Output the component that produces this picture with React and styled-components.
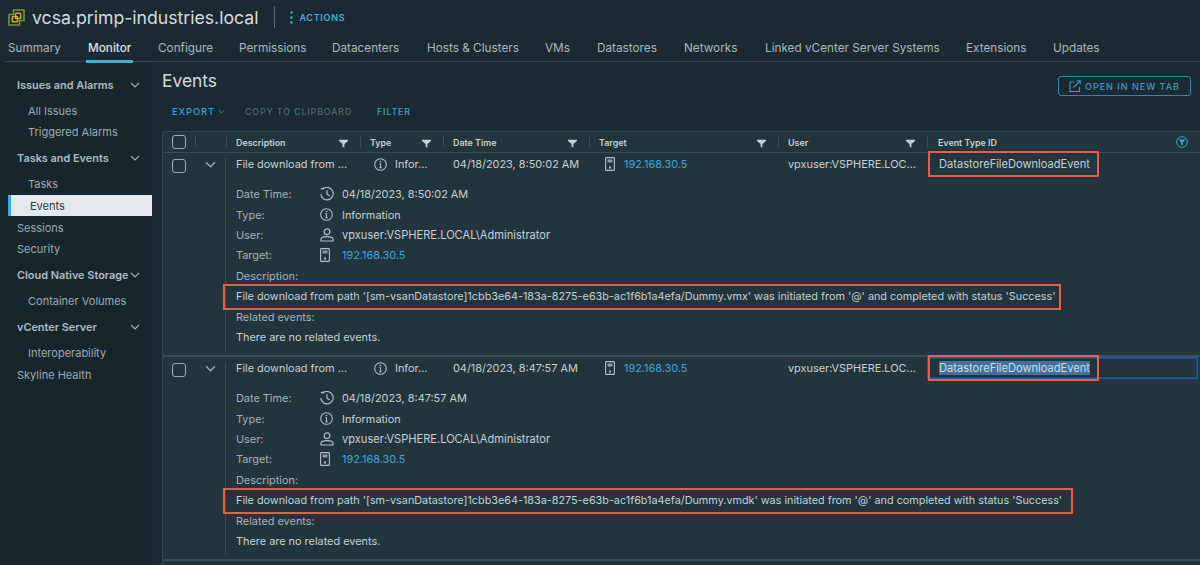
import React from "react";
import styled, { createGlobalStyle } from "styled-components";

const Global = createGlobalStyle`
  html, body { margin: 0; background: #1b2a32; }
  * { box-sizing: border-box; }
  body { font-family: Inter, "Noto Sans", "Liberation Sans", sans-serif; }
`;
const Page = styled.div`
  width: 1200px; height: 565px; overflow: hidden; background: #1b2a32; color: #c4ced3;
  display: flex; flex-direction: column;
`;
const Header = styled.header`
  height: 36px; display: flex; align-items: center; padding: 0 0 2px 8px; flex: none;
`;
const Title = styled.h1`
  margin: 0 0 0 7px; font-size: 17.65px; font-weight: 400; color: #d5dde1; white-space: nowrap;
`;
const Divider = styled.span`
  width: 1px; height: 22px; background: #5c6f79; margin: 0 15px 0 16px;
`;
const ActionsBtn = styled.div`
  display: flex; align-items: center; gap: 6px; color: #49afd9; font-size: 9px; font-weight: 600; letter-spacing: .7px;
`;
const Tabs = styled.nav`
  height: 26px; flex: none; margin-left: 5px; display: flex; border-bottom: 1.5px solid #35474f; align-items: stretch;
`;
const Tab = styled.div`
  font-size: 11.75px; color: ${p => (p.$active ? "#dbe2e6" : "#aab7be")}; display: flex; align-items: center; white-space: nowrap;
  position: relative; width: ${p => p.$w}px; padding-left: ${p => p.$pl || 0}px; padding-bottom: 2px;
  ${p => p.$active && `font-weight:500; &::after{content:""; position:absolute; left:0; width:47px; bottom:-1.5px; height:2.5px; background:#49afd9;}`}
`;
const Body = styled.div`
  flex: 1; display: flex; min-height: 0;
`;
const Side = styled.aside`
  width: 153px; flex: none; background: #17252c; border-right: 1px solid #1f2e36; padding: 12px 0 0 8px; display: flex; flex-direction: column;
`;
const SideHead = styled.div`
  height: 22px; margin-top: ${p => p.$mt || 0}px; padding: 0 12px 0 9px; display: flex; align-items: center; justify-content: space-between;
  font-size: 10.9px; font-weight: 600; color: #afbbc2; white-space: nowrap;
`;
const SideItem = styled.div`
  height: 21.3px; margin-top: ${p => p.$mt || 0}px; padding-left: ${p => p.$top ? 9 : 20}px; display: flex; align-items: center;
  font-size: 11px; color: #9dabb3; white-space: nowrap;
  ${p => p.$active && `background:#e3e9ec; color:#2b3a42; border-left:3px solid #3ea6e0; padding-left:19px;`}
`;
const Main = styled.main`
  flex: 1; min-width: 0; padding: 7px 0 0 9px; display: flex; flex-direction: column;
`;
const TitleRow = styled.div`
  display: flex; justify-content: space-between; align-items: flex-start; padding-right: 9px; height: 30px; flex: none;
`;
const H2 = styled.h2`
  margin: 0; font-size: 17.4px; line-height: 24px; font-weight: 400; color: #d5dde1;
`;
const OpenBtn = styled.div`
  margin-top: 7px; width: 133px; height: 20px; border: 1px solid #2f88ad; border-radius: 3px; display: flex; align-items: center; justify-content: center; gap: 4px;
  color: #3b9cc4; font-size: 9px; font-weight: 500; letter-spacing: 1px; white-space: nowrap;
`;
const Toolbar = styled.div`
  height: 32px; margin-top: -4px; display: flex; align-items: center; padding-left: 10px; flex: none;
`;
const ToolBtn = styled.div`
  font-size: ${p => p.$fs || 8.8}px; font-weight: 500; letter-spacing: .9px; color: ${p => (p.$off ? "#55686f" : "#3ba3d0")}; width: ${p => p.$w}px; display: flex; align-items: center; gap: 3px; white-space: nowrap;
`;
const Table = styled.div`
  margin-top: 4px; background: #22343c; border: 1px solid #33464e; border-right: 0; border-bottom: 0; border-radius: 3px 0 0 0; flex: 1; min-height: 0;
`;
const cols = "32px 31px 134px 83px 146px 189px 149px 1fr";
const HeadRow = styled.div`
  display: grid; grid-template-columns: ${cols}; height: 21px; border-bottom: 1.5px solid #3b4e57;
`;
const HeadCell = styled.div`
  position: relative; display: flex; align-items: center; justify-content: ${p => p.$center ? "center" : "space-between"};
  padding: ${p => p.$center ? "0" : `0 12px 0 ${p.$pl || 10}px`}; font-size: 8.9px; font-weight: 600; color: #c6d0d5; white-space: nowrap;
  &::before { content: ""; position: absolute; left: 0; top: 4px; bottom: 5px; width: 1px; background: ${p => p.$first ? "transparent" : "#3b4e57"}; }
`;
const Check = styled.span`
  width: 14px; height: 14px; border: 1px solid #9fadb5; border-radius: 3px; display: block; flex: none; margin-top: ${p => p.$mt || 0}px;
`;
const Event = styled.section`
  height: 204px; position: relative; border-bottom: 2px solid #3b4e57;
  &::before { content: ""; position: absolute; left: 62px; top: 5px; bottom: 4px; width: 1px; background: #3b4e57; }
`;
const Summary = styled.div`
  display: grid; grid-template-columns: ${cols}; height: 22px; align-items: center;
`;
const Cell = styled.div`
  font-size: ${p => p.$fs || 10.9}px; padding-left: ${p => p.$pl ?? 10}px; white-space: nowrap; display: flex; align-items: center; gap: ${p => p.$gap || 8}px; color: #c8d1d6;
  height: 22px; ${p => p.$selected && `box-shadow: inset 0 0 0 1.5px #1d5fae; margin-right: 2px;`}
`;
const Link = styled.span` color: #3ea6dc; `;
const Boxed = styled.span`
  position: relative; display: inline-block;
  &::after { content: ""; position: absolute; left: ${p => p.$l}px; right: ${p => p.$r}px; top: ${p => p.$t}px; bottom: ${p => p.$b}px; border: 2.5px solid #ee5a4d; pointer-events: none; }
`;
const Picked = styled.span` background: #44719b; color: #c9dff0; `;
const Details = styled.div`
  padding: 9px 0 0 73px;
`;
const Pair = styled.div`
  display: grid; grid-template-columns: 84px 22px 1fr; height: 20.4px; align-items: center;
`;
const Label = styled.div` color: #a5b2b9; font-size: 10.9px; height: 20.4px; display:flex; align-items:center; `;
const Text = styled.div` color: #c8d1d6; font-size: ${p => p.$fs || 10.9}px; height: 20.4px; display:flex; align-items:center; white-space: nowrap; `;

const Chev = ({ s = 10, c = "#9fadb5", w = 1.2 }) => (
  <svg width={s} height={s} viewBox="0 0 10 10" fill="none" stroke={c} strokeWidth={w}><path d="M1 3l4 4 4-4" /></svg>
);
const Funnel = () => (
  <svg width="9" height="11" viewBox="0 0 9 11" fill="#c6d0d5"><path d="M0 2.800h9v1.200L5.400 7v3.600L3.600 9.800V7L0 4z" /></svg>
);
const FunnelOn = () => (
  <svg width="12" height="12" viewBox="0 0 12 12"><circle cx="6" cy="6" r="5.300" fill="none" stroke="#3ba3d0" /><path d="M2.600 3.400h6.800L6.900 6.200V9.300L5.100 8.500V6.200z" fill="#3ba3d0" /></svg>
);
const ic = "#b3bfc5";
const Info = () => (
  <svg width="13" height="13" viewBox="0 0 13 13" fill="none" stroke={ic} strokeWidth="1.100"><circle cx="6.500" cy="6.500" r="5.800" /><path d="M6.500 5.500v4.200M5.300 9.700h2.400M5.400 5.500h1.100" /><circle cx="6.500" cy="3.600" r=".8" fill={ic} stroke="none" /></svg>
);
const Clock = () => (
  <svg width="14" height="14" viewBox="0 0 14 14" fill="none" stroke={ic} strokeWidth="1.200"><path d="M3 1.900A6.200 6.200 0 1 1 .8 7" /><path d="M.9 1.400L3 2l.5-1.500" /><path d="M7 3.200v4l2.800 1.700" /></svg>
);
const User = () => (
  <svg width="14" height="14" viewBox="0 0 14 14" fill="none" stroke={ic} strokeWidth="1.200"><circle cx="7" cy="3.800" r="2.900" /><path d="M1 13v-2c0-1.400 2.700-2.400 6-2.400s6 1 6 2.400v2z" /></svg>
);
const Host = () => (
  <svg width="10" height="14" viewBox="0 0 10 14" fill="none" stroke={ic} strokeWidth="1.100"><rect x=".6" y=".6" width="8.800" height="12.800" rx=".6" /><rect x="2.500" y="2.500" width="5" height="3" fill="#8e9ba2" stroke="none" /><rect x="4" y="9.500" width="2" height="2" fill={ic} stroke="none" /></svg>
);
const Logo = () => (
  <svg width="17" height="17" viewBox="0 0 17 17" fill="none">
    <path d="M5.500 1h10.500v10.500h-4.500v4.500H1V5.500h4.500z" stroke="#6f9a33" strokeWidth="1.600" strokeLinejoin="round" />
    <rect x="4.300" y="7.500" width="5.200" height="5.200" rx=".8" stroke="#d8a722" strokeWidth="1.500" />
    <rect x="7.500" y="4.300" width="5.200" height="5.200" rx=".8" stroke="#d8a722" strokeWidth="1.500" />
  </svg>
);
const Dots = () => (
  <svg width="3" height="13" viewBox="0 0 3 13" fill="#49afd9"><circle cx="1.500" cy="1.500" r="1.200" /><circle cx="1.500" cy="6.500" r="1.200" /><circle cx="1.500" cy="11.500" r="1.200" /></svg>
);
const External = () => (
  <svg width="12" height="12" viewBox="0 0 12 12" fill="none" stroke="#3b9cc4" strokeWidth="1.100"><path d="M5.500 2H1v9.500h9.500V7" /><path d="M4.500 7.500L11 1M7.500 .8H11.200V4.500" /></svg>
);

const tabs = [
  ["Summary", 81], ["Monitor", 72, true], ["Configure", 81], ["Permissions", 93], ["Datacenters", 95], ["Hosts & Clusters", 118],
  ["VMs", 52], ["Datastores", 87], ["Networks", 81], ["Linked vCenter Server Systems", 201], ["Extensions", 87], ["Updates", 90],
];

function EventBlock({ date, file, selected }) {
  return (
    <Event>
      <Summary>
        <Cell $pl={9}><Check $mt={4} /></Cell>
        <Cell $pl={10}><Chev s={11} /></Cell>
        <Cell>File download from ...</Cell>
        <Cell $pl={14}><Info />Infor...</Cell>
        <Cell>{date}</Cell>
        <Cell $pl={16} $gap={9}><Host /><Link>192.168.30.5</Link></Cell>
        <Cell>vpxuser:VSPHERE.LOC...</Cell>
        <Cell $pl={12} $fs={11.1} $selected={selected}>
          <Boxed $l={-11} $r={-9} $t={-6} $b={-6}>
            {selected ? <Picked>DatastoreFileDownloadEvent</Picked> : "DatastoreFileDownloadEvent"}
          </Boxed>
        </Cell>
      </Summary>
      <Details>
        <Pair><Label>Date Time:</Label><Clock /><Text>{date}</Text></Pair>
        <Pair><Label>Type:</Label><Info /><Text>Information</Text></Pair>
        <Pair><Label>User:</Label><User /><Text $fs={11.1}>vpxuser:VSPHERE.LOCAL\Administrator</Text></Pair>
        <Pair><Label>Target:</Label><Host /><Text><Link>192.168.30.5</Link></Text></Pair>
        <Label>Description:</Label>
        <Text $fs={10.82}>
          <Boxed $l={-13} $r={file === "vmx" ? -6 : -11} $t={-6} $b={-7}>
            File download from path '[sm-vsanDatastore]1cbb3e64-183a-8275-e63b-ac1f6b1a4efa/Dummy.{file}' was initiated from '@' and completed with status 'Success'
          </Boxed>
        </Text>
        <Label>Related events:</Label>
        <Text>There are no related events.</Text>
      </Details>
    </Event>
  );
}

export default function App() {
  return (
    <Page>
      <Global />
      <Header>
        <Logo />
        <Title>vcsa.primp-industries.local</Title>
        <Divider />
        <ActionsBtn><Dots />ACTIONS</ActionsBtn>
      </Header>
      <Tabs>
        {tabs.map(([t, w, a], i) => (
          <Tab key={t} $w={w} $active={a} $pl={a ? 2 : (i === 0 ? 3 : 0)}>{t}</Tab>
        ))}
      </Tabs>
      <Body>
        <Side>
          <SideHead>Issues and Alarms<Chev /></SideHead>
          <SideItem $mt={4}>All Issues</SideItem>
          <SideItem>Triggered Alarms</SideItem>
          <SideHead $mt={4}>Tasks and Events<Chev /></SideHead>
          <SideItem $mt={5}>Tasks</SideItem>
          <SideItem $active>Events</SideItem>
          <SideItem $top $mt={1}>Sessions</SideItem>
          <SideItem $top>Security</SideItem>
          <SideHead $mt={4}>Cloud Native Storage<Chev /></SideHead>
          <SideItem $mt={5}>Container Volumes</SideItem>
          <SideHead $mt={4}>vCenter Server<Chev /></SideHead>
          <SideItem $mt={4}>Interoperability</SideItem>
          <SideItem $top $mt={1}>Skyline Health</SideItem>
        </Side>
        <Main>
          <TitleRow>
            <H2>Events</H2>
            <OpenBtn><External />OPEN IN NEW TAB</OpenBtn>
          </TitleRow>
          <Toolbar>
            <ToolBtn $w={73} $fs={9.4}>EXPORT <Chev s={7} c="#3ba3d0" /></ToolBtn>
            <ToolBtn $w={132} $off>COPY TO CLIPBOARD</ToolBtn>
            <ToolBtn $w={60}>FILTER</ToolBtn>
          </Toolbar>
          <Table>
            <HeadRow>
              <HeadCell $center $first><Check /></HeadCell>
              <HeadCell />
              <HeadCell>Description<Funnel /></HeadCell>
              <HeadCell>Type<Funnel /></HeadCell>
              <HeadCell>Date Time<Funnel /></HeadCell>
              <HeadCell>Target<Funnel /></HeadCell>
              <HeadCell>User<Funnel /></HeadCell>
              <HeadCell $pl={11}>Event Type ID<FunnelOn /></HeadCell>
            </HeadRow>
            <EventBlock date="04/18/2023, 8:50:02 AM" file="vmx" />
            <EventBlock date="04/18/2023, 8:47:57 AM" file="vmdk" selected />
          </Table>
        </Main>
      </Body>
    </Page>
  );
}
